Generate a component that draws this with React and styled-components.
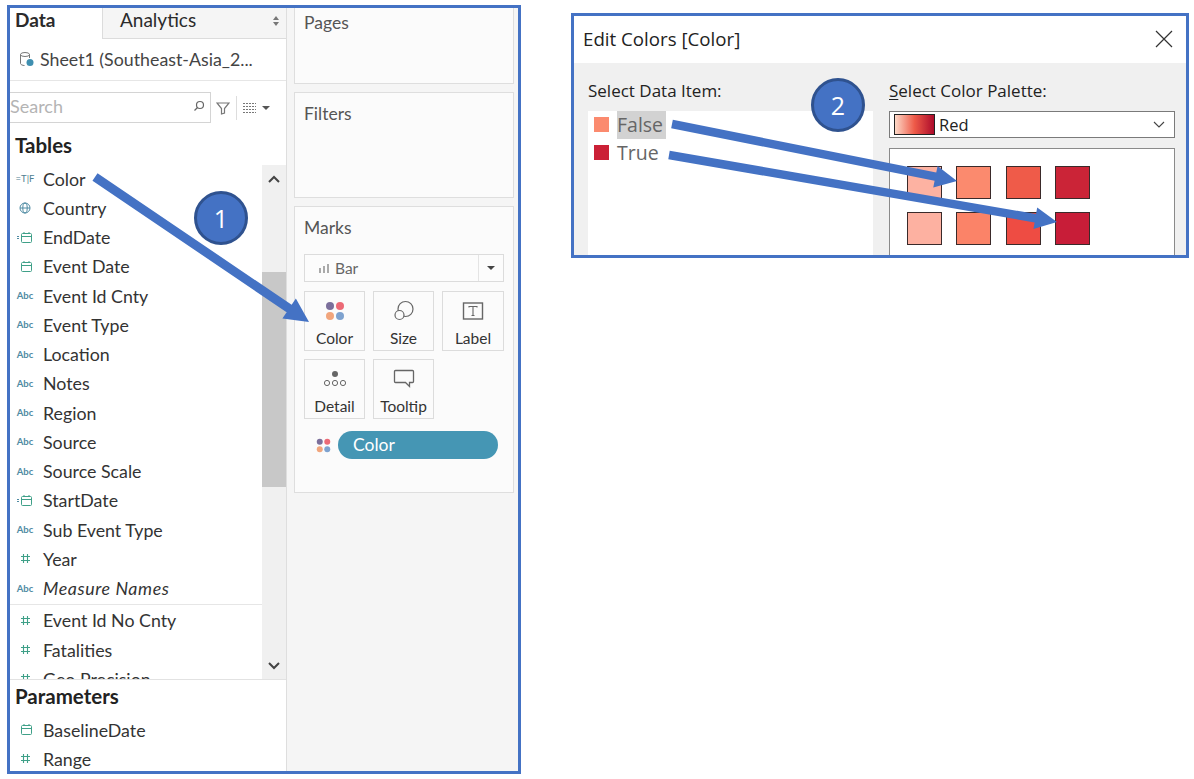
import React from 'react';
import styled, { createGlobalStyle } from 'styled-components';

const BLUE = '#4472c4';
const TEAL = '#4f8ba3';
const GREEN = '#3fa088';

const GlobalStyle = createGlobalStyle`
  html, body { margin: 0; padding: 0; background: #fff; }
  body { font-family: Lato, "Liberation Sans", sans-serif; color: #2b2b2b; }
  * { box-sizing: border-box; }
`;

const Page = styled.div`
  position: relative;
  width: 1194px;
  height: 779px;
  overflow: hidden;
  display: flex;
  align-items: flex-start;
  padding: 5px 0 0 7px;
  gap: 50px;
`;

/* tableau side panels */
const Frame = styled.div`
  width: 514px;
  height: 769px;
  border: 3px solid ${BLUE};
  display: flex;
  background: #f5f5f5;
  overflow: hidden;
`;

const DataPane = styled.div`
  width: 277px;
  flex: none;
  background: #fff;
  border-right: 1px solid #dedede;
  display: flex;
  flex-direction: column;
`;

const TabBar = styled.div`
  height: 31px;
  flex: none;
  display: flex;
`;

const Tab = styled.div`
  width: ${p => (p.$active ? '92px' : 'auto')};
  flex: ${p => (p.$active ? 'none' : 1)};
  padding-left: ${p => (p.$active ? '5px' : '17px')};
  padding-right: 7px;
  font-size: 19px;
  font-weight: ${p => (p.$active ? 700 : 400)};
  line-height: 24px;
  background: ${p => (p.$active ? '#fff' : '#f5f5f5')};
  border-bottom: ${p => (p.$active ? 'none' : '1px solid #dcdcdc')};
  border-left: ${p => (p.$active ? 'none' : '1px solid #dcdcdc')};
  display: flex;
  justify-content: space-between;
`;

const SourceRow = styled.div`
  height: 42px;
  flex: none;
  display: flex;
  align-items: center;
  gap: 5px;
  padding: 0 0 2px 9px;
  border-bottom: 1px solid #e6e6e6;
  font-size: 17.8px;
  color: #444;
`;

const SearchRow = styled.div`
  display: flex;
  align-items: center;
  margin-top: 11px;
  height: 31px;
  flex: none;
`;

const SearchBox = styled.div`
  width: 201px;
  height: 31px;
  border: 1px solid #d4d4d4;
  border-left: none;
  display: flex;
  align-items: center;
  justify-content: space-between;
  padding: 0 5px 3px 0;
  font-size: 18px;
  color: #b4b4b4;
`;

const SearchTools = styled.div`
  display: flex;
  align-items: center;
  padding-left: 5px;
  gap: 6px;
`;

const ToolDivider = styled.span`
  width: 1px;
  height: 24px;
  background: #ddd;
`;

const Caret = styled.span`
  width: 0;
  height: 0;
  border-left: 4px solid transparent;
  border-right: 4px solid transparent;
  border-top: 4px solid ${p => p.$color || '#555'};
`;

const SectionTitle = styled.div`
  font-size: 20.5px;
  font-weight: 700;
  line-height: 24px;
  padding-left: 5px;
  color: #222;
`;

const TablesTitle = styled(SectionTitle)`
  margin-top: 10px;
  height: 32px;
  flex: none;
`;

const ListArea = styled.div`
  height: 515px;
  flex: none;
  display: flex;
  border-bottom: 1px solid #e2e2e2;
  overflow: hidden;
`;

const FieldList = styled.div`
  width: 252px;
  flex: none;
  overflow: hidden;
  margin-top: -1px;
`;

const FieldGroup = styled.div`
  border-bottom: ${p => (p.$divided ? '1px solid #e6e6e6' : 'none')};
  padding-bottom: ${p => (p.$divided ? '1px' : '0')};
  margin-bottom: ${p => (p.$divided ? '1px' : '0')};
`;

const FieldRow = styled.div`
  height: 29.25px;
  flex: none;
  display: flex;
  align-items: center;
  font-size: 17.8px;
  color: #333;
  font-style: ${p => (p.$italic ? 'italic' : 'normal')};
  letter-spacing: ${p => (p.$italic ? '0.6px' : '0')};
  white-space: nowrap;
`;

const FieldIcon = styled.span`
  width: 33px;
  flex: none;
  display: flex;
  justify-content: center;
  padding-right: 3px;
  font-size: 9.5px;
  font-weight: ${p => (p.$thin ? 400 : 700)};
  font-style: normal;
  letter-spacing: 0;
  color: ${p => p.$color || TEAL};
`;

const ScrollBar = styled.div`
  width: 24px;
  flex: none;
  background: #f0f0f0;
  display: flex;
  flex-direction: column;
  align-items: center;
  padding-top: 10px;
`;

const ScrollThumb = styled.div`
  width: 24px;
  height: 215px;
  background: #c8c8c8;
  margin-top: 89px;
  margin-bottom: 175px;
`;

const ParamsTitle = styled(SectionTitle)`
  margin-top: 4px;
  margin-bottom: 7px;
`;

/* right column with Pages, Filters, Marks */
const ShelfPane = styled.div`
  flex: 1;
  padding: 0 5px 0 7px;
  display: flex;
  flex-direction: column;
  gap: 8px;
`;

const Card = styled.div`
  height: ${p => p.$h}px;
  flex: none;
  background: #fbfbfb;
  border: 1px solid #dedede;
  border-top: ${p => (p.$open ? 'none' : '1px solid #dedede')};
  padding: ${p => (p.$open ? '4px' : '10px')} 9px 0;
  font-size: 17.5px;
  color: #555;
`;

const MarkSelect = styled.div`
  margin-top: 16px;
  height: 28px;
  width: 200px;
  border: 1px solid #dcdcdc;
  background: #fcfcfc;
  display: flex;
  align-items: center;
  font-size: 15.5px;
  color: #666;
`;

const MarkName = styled.div`
  flex: 1;
  display: flex;
  align-items: center;
  gap: 6px;
  padding-left: 14px;
`;

const MarkArrow = styled.div`
  width: 25px;
  height: 100%;
  border-left: 1px solid #e4e4e4;
  display: flex;
  align-items: center;
  justify-content: center;
`;

const MarkGrid = styled.div`
  margin-top: 9px;
  width: 200px;
  display: grid;
  grid-template-columns: 61px 61px 62px;
  grid-auto-rows: 60px;
  column-gap: 8px;
  row-gap: 8px;
`;

const MarkButton = styled.div`
  border: 1px solid #dcdcdc;
  display: flex;
  flex-direction: column;
  align-items: center;
  font-size: 15.5px;
  color: #333;
  padding-top: 8px;
`;

const MarkIcon = styled.div`
  height: 22px;
  margin-bottom: 7px;
  display: flex;
  align-items: center;
  justify-content: center;
`;

const PillRow = styled.div`
  margin-top: 12px;
  display: flex;
  align-items: center;
  padding-left: 12px;
  gap: 7px;
`;

const Pill = styled.div`
  width: 160px;
  height: 28px;
  border-radius: 14px;
  background: #4596b4;
  color: #fff;
  font-size: 17.5px;
  line-height: 28px;
  padding-left: 15px;
`;

/* edit colors dialog */
const Dialog = styled.div`
  width: 618px;
  height: 245px;
  margin-top: 8px;
  border: 3px solid ${BLUE};
  display: flex;
  flex-direction: column;
  overflow: hidden;
  font-family: "Open Sans", "Liberation Sans", sans-serif;
`;

const DialogHead = styled.div`
  height: 47px;
  flex: none;
  background: #fff;
  display: flex;
  align-items: center;
  justify-content: space-between;
  padding: 0 13px 2px 9px;
  font-size: 18.7px;
  color: #222;
`;

const DialogBody = styled.div`
  flex: 1;
  background: #f0f0f0;
  display: flex;
  padding: 15px 11px 0 14px;
  gap: 16px;
`;

const DialogCol = styled.div`
  width: ${p => p.$w}px;
  flex: none;
  display: flex;
  flex-direction: column;
`;

const FieldLabel = styled.div`
  height: 33px;
  font-size: 17px;
  line-height: 25px;
  color: #222;
  white-space: nowrap;
  u { text-underline-offset: 2px; }
`;

const ItemList = styled.div`
  flex: 1;
  background: #fff;
  padding-left: 6px;
`;

const ItemRow = styled.div`
  height: 28px;
  display: flex;
  align-items: flex-start;
  gap: 8px;
`;

const ItemSwatch = styled.span`
  width: 15px;
  height: 15px;
  margin-top: 6px;
  background: ${p => p.$color};
`;

const ItemText = styled.span`
  height: 28px;
  padding: 0 3px 0 0;
  line-height: 28px;
  font-size: 19.5px;
  color: #666;
  background: ${p => (p.$selected ? '#d2d2d2' : 'transparent')};
`;

const PaletteSelect = styled.div`
  height: 27px;
  flex: none;
  background: #fff;
  border: 1px solid #7a7a7a;
  display: flex;
  align-items: center;
  gap: 4px;
  padding: 0 9px 0 4px;
  font-size: 16.5px;
  color: #222;
`;

const RampPreview = styled.span`
  width: 41px;
  height: 21px;
  border: 1px solid #222;
  background: linear-gradient(90deg, #fdd9c8, #ee5a48 50%, #ad0b2b);
`;

const RampName = styled.span`
  flex: 1;
`;

const PaletteBox = styled.div`
  flex: 1;
  margin-top: 10px;
  background: #fff;
  border: 1px solid #8a8a8a;
  border-bottom: none;
  padding: 17px 0 0 17px;
  display: grid;
  grid-template-columns: repeat(4, 35px);
  grid-auto-rows: 33px;
  column-gap: 14.3px;
  row-gap: 13px;
`;

const PaletteSwatch = styled.span`
  background: ${p => p.$color};
  border: 1px solid #3a2a2a;
`;

/* annotations drawn on top */
const Overlay = styled.svg`
  position: absolute;
  inset: 0;
  pointer-events: none;
`;

const Badge = styled.div`
  position: absolute;
  left: ${p => p.$x - 27}px;
  top: ${p => p.$y - 27}px;
  width: 54px;
  height: 54px;
  border-radius: 50%;
  background: ${BLUE};
  border: 3px solid #2f528f;
  color: #fff;
  font-family: "Open Sans", "Liberation Sans", sans-serif;
  font-size: 25px;
  display: flex;
  align-items: center;
  justify-content: center;
`;

const Hash = () => (
  <svg width="11" height="11" viewBox="0 0 11 11" stroke={GREEN} strokeWidth="1.1" fill="none">
    <path d="M3.5 1v9M7.5 1v9M1 3.5h9M1 7.5h9" />
  </svg>
);

const Calendar = ({ marked }) => (
  <svg width="16" height="11" viewBox="0 0 16 11" stroke={GREEN} strokeWidth="1" fill="none">
    {marked && <path d="M0 4.5h2M0 6.5h2" stroke={TEAL} />}
    <rect x="4.5" y="1.5" width="10" height="9" rx="1" />
    <path d="M4.5 4.5h10M7 0v2M12 0v2" />
  </svg>
);

const Globe = () => (
  <svg width="12" height="12" viewBox="0 0 12 12" stroke={TEAL} strokeWidth="1" fill="none">
    <circle cx="6" cy="6" r="5" />
    <ellipse cx="6" cy="6" rx="2.2" ry="5" />
    <path d="M1 6h10" />
  </svg>
);

const Dots = ({ size = 20 }) => (
  <svg width={size} height={size} viewBox="0 0 20 20">
    <circle cx="5" cy="5" r="4" fill="#7b6f9b" />
    <circle cx="15" cy="5" r="4" fill="#ec6a76" />
    <circle cx="5" cy="15" r="4" fill="#f1a57c" />
    <circle cx="15" cy="15" r="4" fill="#7ea2cf" />
  </svg>
);

const renderIcon = type => {
  if (type === 'bool') return <FieldIcon $thin $color="#4f7f92">=T|F</FieldIcon>;
  if (type === 'geo') return <FieldIcon><Globe /></FieldIcon>;
  if (type === 'calc-date') return <FieldIcon><Calendar marked /></FieldIcon>;
  if (type === 'date') return <FieldIcon><Calendar /></FieldIcon>;
  if (type === 'num') return <FieldIcon><Hash /></FieldIcon>;
  return <FieldIcon>Abc</FieldIcon>;
};

const TABLE_FIELDS = [
  ['bool', 'Color'],
  ['geo', 'Country'],
  ['calc-date', 'EndDate'],
  ['date', 'Event Date'],
  ['abc', 'Event Id Cnty'],
  ['abc', 'Event Type'],
  ['abc', 'Location'],
  ['abc', 'Notes'],
  ['abc', 'Region'],
  ['abc', 'Source'],
  ['abc', 'Source Scale'],
  ['calc-date', 'StartDate'],
  ['abc', 'Sub Event Type'],
  ['num', 'Year'],
  ['abc', 'Measure Names', true],
];

const MEASURES = ['Event Id No Cnty', 'Fatalities', 'Geo Precision'];

const PALETTE = [
  '#fdb2a2', '#fb8a6e', '#ef5b49', '#cb2437',
  '#fdb1a1', '#fb8368', '#ee4c43', '#c81d38',
];

// arrow polygon from tail to tip, head size in px
const arrowPoints = (x1, y1, x2, y2, w, headLen, headW) => {
  const len = Math.hypot(x2 - x1, y2 - y1);
  const ux = (x2 - x1) / len;
  const uy = (y2 - y1) / len;
  const nx = -uy;
  const ny = ux;
  const bx = x2 - ux * headLen;
  const by = y2 - uy * headLen;
  const pts = [
    [x1 + (nx * w) / 2, y1 + (ny * w) / 2],
    [bx + (nx * w) / 2, by + (ny * w) / 2],
    [bx + (nx * headW) / 2, by + (ny * headW) / 2],
    [x2, y2],
    [bx - (nx * headW) / 2, by - (ny * headW) / 2],
    [bx - (nx * w) / 2, by - (ny * w) / 2],
    [x1 - (nx * w) / 2, y1 - (ny * w) / 2],
  ];
  return pts.map(p => p.join(',')).join(' ');
};

const App = () => (
  <Page>
    <GlobalStyle />
    <Frame>
      <DataPane>
        <TabBar>
          <Tab $active>Data</Tab>
          <Tab>
            Analytics
            <svg width="6" height="10" viewBox="0 0 6 10" fill="#777" style={{ marginTop: 8 }}>
              <path d="M3 0l3 4H0zM3 10L0 6h6z" />
            </svg>
          </Tab>
        </TabBar>
        <SourceRow>
          <svg width="16" height="16" viewBox="0 0 16 16" fill="none">
            <ellipse cx="6" cy="3.5" rx="4.5" ry="2" stroke="#777" />
            <path d="M1.5 3.5v9c0 1 2 2 4 2M10.5 3.5V7" stroke="#777" />
            <circle cx="11" cy="11.5" r="3.5" fill="#3f8fb0" />
          </svg>
          Sheet1 (Southeast-Asia_2...
        </SourceRow>
        <SearchRow>
          <SearchBox>
            Search
            <svg width="12" height="12" viewBox="0 0 12 12" fill="none" stroke="#666" strokeWidth="1.2">
              <circle cx="7" cy="5" r="3.5" />
              <path d="M4.5 7.5L1.5 10.5" />
            </svg>
          </SearchBox>
          <SearchTools>
            <svg width="14" height="14" viewBox="0 0 14 14" fill="none" stroke="#777" strokeWidth="1.2">
              <path d="M1 2h12L8.5 7.5V12L5.5 13V7.5z" />
            </svg>
            <ToolDivider />
            <svg width="13" height="11" viewBox="0 0 13 11" stroke="#777" strokeWidth="1" strokeDasharray="2 1">
              <path d="M0 1.5h13M0 4.5h13M0 7.5h13M0 10.5h13" />
            </svg>
            <Caret />
          </SearchTools>
        </SearchRow>
        <TablesTitle>Tables</TablesTitle>
        <ListArea>
          <FieldList>
            <FieldGroup $divided>
              {TABLE_FIELDS.map(([type, name, italic]) => (
                <FieldRow key={name} $italic={italic}>
                  {renderIcon(type)}
                  {name}
                </FieldRow>
              ))}
            </FieldGroup>
            {MEASURES.map(name => (
              <FieldRow key={name}>
                {renderIcon('num')}
                {name}
              </FieldRow>
            ))}
          </FieldList>
          <ScrollBar>
            <svg width="12" height="8" viewBox="0 0 12 8" fill="none" stroke="#444" strokeWidth="2">
              <path d="M1 7l5-5 5 5" />
            </svg>
            <ScrollThumb />
            <svg width="12" height="8" viewBox="0 0 12 8" fill="none" stroke="#444" strokeWidth="2">
              <path d="M1 1l5 5 5-5" />
            </svg>
          </ScrollBar>
        </ListArea>
        <ParamsTitle>Parameters</ParamsTitle>
        <FieldRow>
          {renderIcon('date')}
          BaselineDate
        </FieldRow>
        <FieldRow>
          {renderIcon('num')}
          Range
        </FieldRow>
      </DataPane>
      <ShelfPane>
        <Card $h={76} $open>Pages</Card>
        <Card $h={106}>Filters</Card>
        <Card $h={287}>
          Marks
          <MarkSelect>
            <MarkName>
              <svg width="10" height="9" viewBox="0 0 10 9" fill="#aaa">
                <path d="M0 4h2v5H0zM4 2h2v7H4zM8 0h2v9H8z" />
              </svg>
              Bar
            </MarkName>
            <MarkArrow><Caret $color="#444" /></MarkArrow>
          </MarkSelect>
          <MarkGrid>
            <MarkButton>
              <MarkIcon><Dots /></MarkIcon>
              Color
            </MarkButton>
            <MarkButton>
              <MarkIcon>
                <svg width="22" height="22" viewBox="0 0 22 22" fill="none" stroke="#666" strokeWidth="1.2">
                  <circle cx="12.5" cy="9" r="7.5" />
                  <circle cx="6.5" cy="15" r="4.5" fill="#fbfbfb" />
                </svg>
              </MarkIcon>
              Size
            </MarkButton>
            <MarkButton>
              <MarkIcon>
                <svg width="22" height="20" viewBox="0 0 22 20" fill="none" stroke="#666" strokeWidth="1.4">
                  <rect x="1.5" y="2" width="19" height="16" />
                  <path d="M7 6.5V5.5h8v1M11 5.5v9M9.5 14.5h3" strokeWidth="1.1" />
                </svg>
              </MarkIcon>
              Label
            </MarkButton>
            <MarkButton>
              <MarkIcon>
                <svg width="24" height="20" viewBox="0 0 24 20" fill="none" stroke="#666">
                  <circle cx="12" cy="5" r="3" fill="#666" stroke="none" />
                  <circle cx="4" cy="14" r="2.6" />
                  <circle cx="12" cy="14" r="2.6" />
                  <circle cx="20" cy="14" r="2.6" />
                </svg>
              </MarkIcon>
              Detail
            </MarkButton>
            <MarkButton>
              <MarkIcon>
                <svg width="22" height="20" viewBox="0 0 22 20" fill="none" stroke="#666" strokeWidth="1.3">
                  <path d="M2.5 1.5h17a1 1 0 0 1 1 1v10a1 1 0 0 1-1 1h-3v4l-4-4h-10a1 1 0 0 1-1-1v-10a1 1 0 0 1 1-1z" />
                </svg>
              </MarkIcon>
              Tooltip
            </MarkButton>
          </MarkGrid>
          <PillRow>
            <Dots size={15} />
            <Pill>Color</Pill>
          </PillRow>
        </Card>
      </ShelfPane>
    </Frame>
    <Dialog>
      <DialogHead>
        Edit Colors [Color]
        <svg width="18" height="18" viewBox="0 0 18 18" stroke="#333" strokeWidth="1.2">
          <path d="M1 1l16 16M17 1L1 17" />
        </svg>
      </DialogHead>
      <DialogBody>
        <DialogCol $w={285}>
          <FieldLabel>Select Data Item:</FieldLabel>
          <ItemList>
            <ItemRow>
              <ItemSwatch $color="#fb8a6e" />
              <ItemText $selected>False</ItemText>
            </ItemRow>
            <ItemRow>
              <ItemSwatch $color="#cb2036" />
              <ItemText>True</ItemText>
            </ItemRow>
          </ItemList>
        </DialogCol>
        <DialogCol $w={286}>
          <FieldLabel><u>S</u>elect Color Palette:</FieldLabel>
          <PaletteSelect>
            <RampPreview />
            <RampName>Red</RampName>
            <svg width="12" height="7" viewBox="0 0 12 7" fill="none" stroke="#444" strokeWidth="1.1">
              <path d="M1 1l5 5 5-5" />
            </svg>
          </PaletteSelect>
          <PaletteBox>
            {PALETTE.map((c, i) => <PaletteSwatch key={i} $color={c} />)}
          </PaletteBox>
        </DialogCol>
      </DialogBody>
    </Dialog>
    <Overlay width="1194" height="779" viewBox="0 0 1194 779">
      <polygon points={arrowPoints(95, 177, 309, 322, 9, 24, 24)} fill={BLUE} />
      <polygon points={arrowPoints(672, 124, 957, 181, 8.5, 22, 22)} fill={BLUE} />
      <polygon points={arrowPoints(669, 155, 1057, 222, 8.5, 22, 22)} fill={BLUE} />
    </Overlay>
    <Badge $x={221} $y={218}>1</Badge>
    <Badge $x={838} $y={105}>2</Badge>
  </Page>
);

export default App;
